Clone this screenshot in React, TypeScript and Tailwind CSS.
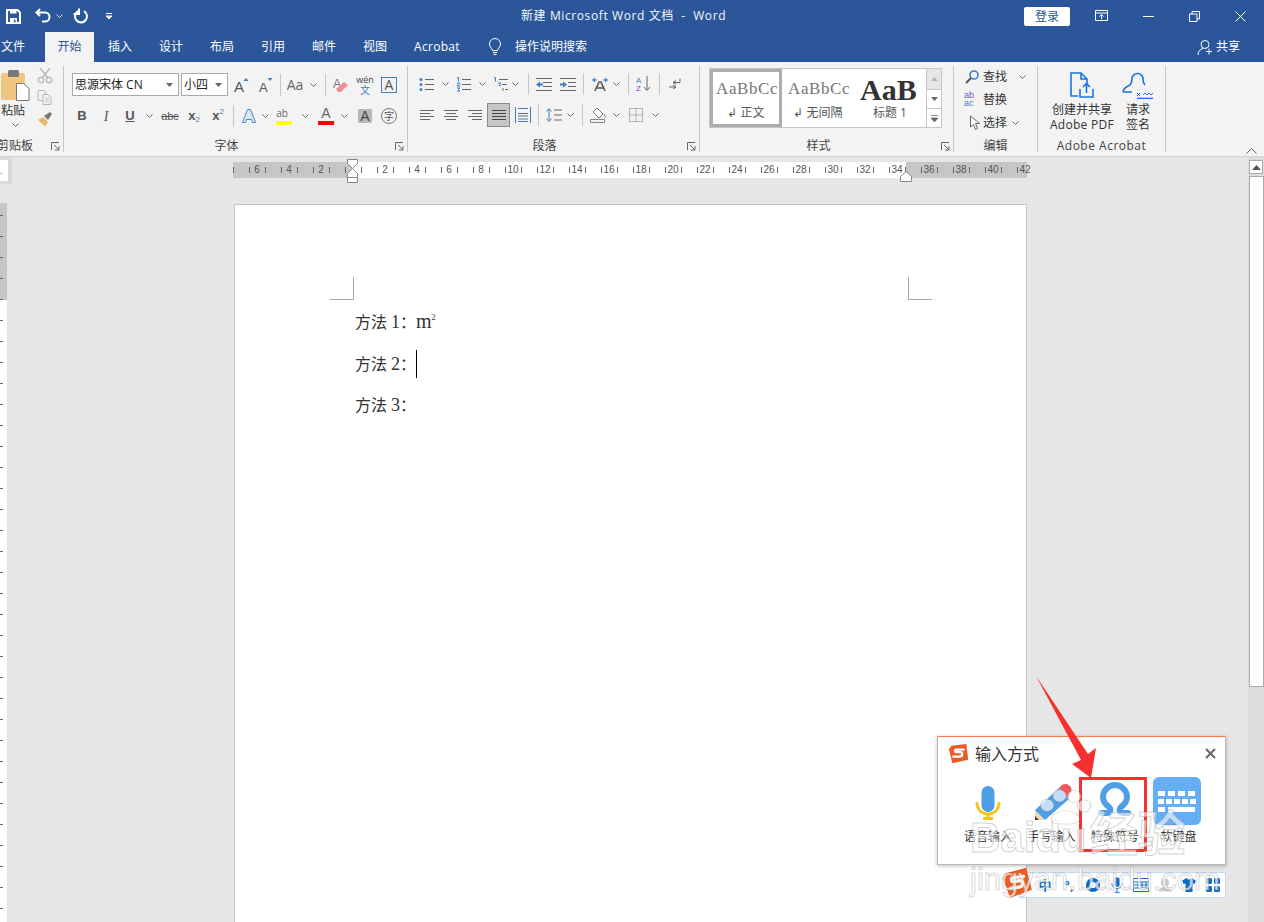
import React from "react";

const Svg = ({ w = 16, h = 16, children, className = "" }: { w?: number; h?: number; children: React.ReactNode; className?: string }) => (
  <svg width={w} height={h} viewBox={`0 0 ${w} ${h}`} fill="none" className={`shrink-0 ${className}`}>
    {children}
  </svg>
);

const Chev = ({ className = "w-[12px]", color = "#666" }: { className?: string; color?: string }) => (
  <div className={`flex items-center justify-center shrink-0 ${className}`}>
    <svg width="7" height="4" viewBox="0 0 7 4" fill="none">
      <path d="M.5.5l3 3 3-3" stroke={color} />
    </svg>
  </div>
);

const Cell = ({ className = "", children }: { className?: string; children: React.ReactNode }) => (
  <div className={`flex items-center justify-center shrink-0 h-[24px] ${className.includes("w-[") ? className : `w-[24px] ${className}`}`}>{children}</div>
);

const Sep = ({ className = "" }: { className?: string }) => <div className={`w-px h-[22px] bg-[#c6c6c6] shrink-0 ${className}`} />;

const Launcher = () => (
  <svg width="9" height="9" viewBox="0 0 9 9" fill="none" className="absolute right-[3px] bottom-[1px]">
    <path d="M.5 8V.5H8M3 3l4.5 4.5M4 8h4V4" stroke="#666" />
  </svg>
);

const GroupLabel = ({ children, className = "" }: { children: React.ReactNode; className?: string }) => (
  <div className={`h-[15px] mt-auto -mb-[1px] text-[12px] leading-[15px] text-[#444] whitespace-nowrap ${className}`}>{children}</div>
);

const Lines = ({ rows, color = "#666" }: { rows: [number, number][]; color?: string }) => (
  <Svg w={16} h={15}>
    {rows.map(([x, x2], i) => (
      <path key={i} d={`M${x} ${2.5 + i * 3}H${x2}`} stroke={color} />
    ))}
  </Svg>
);

const S = ({ size }: { size: number }) => (
  <svg width={size} height={size} viewBox="0 0 24 24">
    <path d="M4 3l17-2 2 18-18 4-4-16z" fill="#ef5a22" />
    <path d="M18 7.5H9.5c-2 0-2 3 0 3h5c2.5 0 2.5 5-1 5H6" stroke="#fff" strokeWidth="2.6" fill="none" strokeLinecap="round" />
  </svg>
);

const tabs = ["插入", "设计", "布局", "引用", "邮件", "视图"];
const rulerMarks = [6, 4, 2, 0, 2, 4, 6, 8, 10, 12, 14, 16, 18, 20, 22, 24, 26, 28, 30, 32, 34, 36, 38, 40, 42];
const vTicks = Array.from({ length: 34 }, (_, i) => i);

const TitleBar = () => (
  <div className="h-[32px] flex items-center text-white shrink-0">
    <div className="w-[42px] pl-[6px] shrink-0">
      <Svg w={15} h={15}>
        <path d="M1 1h10.500L14 3.500V14H1z" stroke="#fff" strokeWidth="2" />
        <path d="M4 1.500h6.500v3H4zM4 9h7v5H4z" fill="#fff" />
        <path d="M8 10.500h1.500v3H8z" fill="#2b579a" />
      </Svg>
    </div>
    <Svg w={16} h={16} className="-ml-[7px]">
      <path d="M5 1L1.500 4.500 5 8M2 4.500h8a4.500 4.500 0 0 1 0 9H7" stroke="#fff" strokeWidth="2" />
    </Svg>
    <Chev className="w-[8px] ml-[4px]" color="#dfe6f1" />
    <Svg w={16} h={16} className="ml-[10px]">
      <path d="M5 3.200a6 6 0 1 0 6 0M6 .5v5.500H.5" stroke="#fff" strokeWidth="2" />
    </Svg>
    <Svg w={8} h={8} className="ml-[16px]">
      <path d="M1 1.500h6M1 4l3 3 3-3z" stroke="#fff" fill="#fff" />
    </Svg>
    <div className="ml-[408px] w-[206px] text-[12px] tracking-[0.6px] whitespace-nowrap text-[#f4f6fa]">新建 Microsoft Word 文档&nbsp;&nbsp;-&nbsp;&nbsp;Word</div>
    <div className="ml-[297px] w-[46px] h-[19px] rounded-[2px] bg-white text-[#2b579a] text-[12px] leading-[19px] text-center">登录</div>
    <Svg w={14} h={12} className="ml-[25px]">
      <path d="M.5.5h12v10H.5zM1 3h11M6.500 9V5M4.500 6.500l2-2 2 2" stroke="#fff" />
    </Svg>
    <div className="ml-[34px] w-[11px] h-px bg-white" />
    <Svg w={11} h={11} className="ml-[35px]">
      <path d="M.5 3h7.500v7.500h-7.500zM3 3V.5h7.500V8H8" stroke="#fff" />
    </Svg>
    <Svg w={11} h={11} className="ml-[35px]">
      <path d="M.5.5l10 10M10.500.5l-10 10" stroke="#fff" />
    </Svg>
  </div>
);

const TabBar = () => (
  <div className="h-[30px] flex text-white text-[12px] leading-[30px] shrink-0">
    <div className="ml-[1px] w-[24px]">文件</div>
    <div className="ml-[20px] w-[49px] bg-[#f3f3f3] text-[#2b579a] text-center">开始</div>
    <div className="flex gap-[27px] ml-[14px]">
      {tabs.map((t) => (
        <div key={t} className="w-[24px]">{t}</div>
      ))}
      <div className="w-[46px] whitespace-nowrap tracking-[0.3px]">Acrobat</div>
    </div>
    <div className="flex items-center ml-[28px]">
      <Svg w={14} h={18}>
        <path d="M4.500 12.500C4 10 1.500 9 1.500 6a5.500 5.500 0 0 1 11 0c0 3-2.500 4-3 6.500zM5 14.500h4M5.500 16.500h3" stroke="#fff" />
      </Svg>
    </div>
    <div className="ml-[13px] w-[72px]">操作说明搜索</div>
    <div className="ml-auto flex items-center mr-[24px]">
      <Svg w={16} h={17}>
        <circle cx="8" cy="5.500" r="4" stroke="#fff" />
        <path d="M1 16c0-4 2.500-6 5-6.500M9 12.500h6M12 9.500v6" stroke="#fff" />
      </Svg>
      <span className="ml-[3px]">共享</span>
    </div>
  </div>
);

const ClipboardGroup = () => (
  <div className="relative w-[64px] h-[86px] shrink-0 flex flex-col border-r border-[#c6c6c6] overflow-hidden">
    <div className="flex">
      <div className="w-[32px] pl-[1px] pt-[4px] flex flex-col">
        <Svg w={29} h={31}>
          <rect x="0" y="3" width="24" height="27" rx="2" fill="#efc67f" />
          <rect x="7" y="0" width="11" height="7" rx="1.500" fill="#777" />
          <path d="M15.500 13.500h7l5.500 5v12h-12.500z" fill="#fff" stroke="#777" />
        </Svg>
        <div className="text-[12px] leading-[14px] mt-[3px] text-[#333] whitespace-nowrap">粘贴</div>
        <Chev className="w-[28px] h-[10px] mt-[2px]" />
      </div>
      <div className="ml-[1px] w-[24px] flex flex-col items-center pt-[1px]">
        <Svg w={16} h={17}>
          <path d="M3 1l8 10M13 1L5 11" stroke="#b5b5b5" strokeWidth="1.300" />
          <circle cx="4" cy="13" r="2.700" stroke="#b5b5b5" strokeWidth="1.300" />
          <circle cx="12" cy="13" r="2.700" stroke="#b5b5b5" strokeWidth="1.300" />
        </Svg>
        <Svg w={16} h={15} className="mt-[6px]">
          <path d="M1 .5h6l1.500 1.500v2M1 .5v10h4M6 4.500h5l3 3v7H6z" stroke="#b5b5b5" fill="#f3f3f3" />
          <path d="M8 8h4M8 10h4M8 12h4" stroke="#c5c5c5" />
        </Svg>
        <Svg w={16} h={16} className="mt-[6px]">
          <path d="M1 9l5-3 5 5-3 4.500z" fill="#e8b96c" />
          <path d="M7 5l6-4 2 2-4 6z" fill="#777" />
        </Svg>
      </div>
    </div>
    <GroupLabel className="-ml-[3px]">剪贴板</GroupLabel>
    <Launcher />
  </div>
);

const FontGroup = () => (
  <div className="relative w-[344px] h-[86px] shrink-0 flex flex-col border-r border-[#c6c6c6]">
    <div className="flex items-center pl-[8px] mt-[7px] h-[23px]">
      <div className="w-[107px] h-[23px] bg-white border border-[#ababab] flex items-center pl-[2px] text-[12px] text-[#222]">
        <span className="flex-1 whitespace-nowrap">思源宋体 CN</span>
        <Svg w={7} h={4} className="mr-[5px]"><path d="M0 0h7L3.500 4z" fill="#666" /></Svg>
      </div>
      <div className="ml-[2px] w-[47px] h-[23px] bg-white border border-[#ababab] flex items-center pl-[2px] text-[12px] text-[#222]">
        <span className="flex-1">小四</span>
        <Svg w={7} h={4} className="mr-[5px]"><path d="M0 0h7L3.500 4z" fill="#666" /></Svg>
      </div>
      <Cell className="w-[24px] ml-[1px]">
        <Svg w={16} h={16}>
          <text x="1" y="15" fontSize="15" fill="#555" fontFamily="Liberation Sans">A</text>
          <path d="M10.500 4l2.500-3 2.500 3z" fill="#3f7fc1" />
        </Svg>
      </Cell>
      <Cell>
        <Svg w={16} h={16}>
          <text x="2" y="15" fontSize="13" fill="#555" fontFamily="Liberation Sans">A</text>
          <path d="M10.500 1l2.500 3 2.500-3z" fill="#3f7fc1" />
        </Svg>
      </Cell>
      <Sep className="ml-[3px]" />
      <Cell className="w-[24px] ml-[2px] text-[14px] text-[#666]">Aa</Cell>
      <Chev className="w-[10px] ml-[1px]" />
      <Sep className="ml-[7px]" />
      <Cell className="w-[24px] ml-[3px]">
        <Svg w={16} h={16}>
          <text x="0" y="11" fontSize="12" fill="#777" fontFamily="Liberation Sans">A</text>
          <path d="M3 12l8-7 4 3-7 7H5z" fill="#ee8d9b" />
        </Svg>
      </Cell>
      <Cell className="w-[24px] flex-col">
        <span className="text-[9px] leading-[10px] text-[#444]">wén</span>
        <span className="text-[10px] leading-[10px] text-[#3f7fc1]">文</span>
      </Cell>
      <Cell className="w-[24px]">
        <div className="w-[16px] h-[16px] border border-[#4a7eb5] text-[14px] text-[#555] leading-[14px] text-center">A</div>
      </Cell>
    </div>
    <div className="flex items-center pl-[6px] mt-[8px] h-[24px]">
      <Cell className="font-bold text-[13px] text-[#555] font-['Liberation_Sans',sans-serif]">B</Cell>
      <Cell className="italic text-[14px] text-[#555] font-['Liberation_Serif',serif]">I</Cell>
      <Cell className="font-bold text-[13px] text-[#555] underline font-['Liberation_Sans',sans-serif]">U</Cell>
      <Chev className="w-[14px]" />
      <Cell className="ml-[2px] text-[11px] text-[#555] line-through font-['Liberation_Sans',sans-serif]">abc</Cell>
      <Cell className="font-bold text-[13px] text-[#555] font-['Liberation_Sans',sans-serif]">
        x<span className="text-[8px] text-[#3f7fc1] font-normal translate-y-[4px]">2</span>
      </Cell>
      <Cell className="font-bold text-[13px] text-[#555] font-['Liberation_Sans',sans-serif]">
        x<span className="text-[8px] text-[#3f7fc1] font-normal -translate-y-[4px]">2</span>
      </Cell>
      <Sep className="ml-[3px]" />
      <Cell className="ml-[3px]">
        <Svg w={16} h={16}>
          <path d="M1.500 14.500L6.500 1.500h3l5 13h-3l-1-3h-5l-1 3z" fill="#dbe9f7" stroke="#4a86c8" />
        </Svg>
      </Cell>
      <Chev className="w-[8px]" />
      <Cell className="ml-[3px] flex-col">
        <span className="text-[10px] leading-[11px] text-[#666] -ml-[4px]">ab</span>
        <div className="w-[16px] h-[4px] mt-[2px] bg-[#ffff00]" />
      </Cell>
      <Chev className="w-[12px] ml-[3px]" />
      <Cell className="ml-[3px] flex-col">
        <span className="text-[14px] leading-[13px] text-[#666] font-['Liberation_Sans',sans-serif]">A</span>
        <div className="w-[16px] h-[4px] mt-[1px] bg-[#ff0000]" />
      </Cell>
      <Chev />
      <Cell className="ml-[3px]">
        <div className="w-[14px] h-[14px] bg-[#b8b8b8] text-[14px] leading-[14px] text-center text-[#444] font-['Liberation_Sans',sans-serif]">A</div>
      </Cell>
      <Cell>
        <div className="w-[16px] h-[16px] rounded-full border border-[#777] text-[10px] leading-[14px] text-center text-[#555]">字</div>
      </Cell>
    </div>
    <GroupLabel className="text-center pr-[18px]">字体</GroupLabel>
    <Launcher />
  </div>
);

const ParagraphGroup = () => (
  <div className="relative w-[292px] h-[86px] shrink-0 flex flex-col border-r border-[#c6c6c6]">
    <div className="flex items-center pl-[11px] mt-[6px] h-[24px]">
      <Cell className="w-[16px]">
        <Svg w={16} h={15}>
          <path d="M6 2.500h9M6 7.500h9M6 12.500h9" stroke="#666" />
          <circle cx="2" cy="2.500" r="1.500" fill="#3f7fc1" />
          <circle cx="2" cy="7.500" r="1.500" fill="#3f7fc1" />
          <circle cx="2" cy="12.500" r="1.500" fill="#3f7fc1" />
        </Svg>
      </Cell>
      <Chev className="w-[12px] ml-[4px]" />
      <Cell className="w-[16px] ml-[5px]">
        <Svg w={16} h={15}>
          <path d="M6 2.500h9M6 7.500h9M6 12.500h9" stroke="#666" />
          <path d="M1 1l1.500-.5v4M1 6h3v.500l-3 2.500h3M1 11h3l-2 1.500 2 1.500H1" stroke="#3f7fc1" />
        </Svg>
      </Cell>
      <Chev className="w-[12px] ml-[4px]" />
      <Cell className="w-[16px] ml-[5px]">
        <Svg w={16} h={15}>
          <path d="M6 2.500h9M9 7.500h5M12 12.500h3" stroke="#666" />
          <path d="M1 1l1.500-.5v4M5 6h3l-2 2 2 1M10 11v3" stroke="#3f7fc1" />
        </Svg>
      </Cell>
      <Chev className="w-[12px]" />
      <Sep className="ml-[7px]" />
      <Cell className="w-[16px] ml-[7px]">
        <Svg w={16} h={13}>
          <path d="M0 .5h16M7 4.500h9M7 8.500h9M0 12.500h16" stroke="#666" />
          <path d="M0 6.500l4-3v2h3v2H4v2z" fill="#3f7fc1" />
        </Svg>
      </Cell>
      <Cell className="w-[16px] ml-[8px]">
        <Svg w={16} h={13}>
          <path d="M0 .5h16M8 4.500h8M8 8.500h8M0 12.500h16" stroke="#666" />
          <path d="M7 6.500l-4-3v2H0v2h3v2z" fill="#3f7fc1" />
        </Svg>
      </Cell>
      <Sep className="ml-[7px]" />
      <Cell className="w-[16px] ml-[8px]">
        <Svg w={16} h={15}>
          <path d="M3 14l4-9h2l4 9M5 11h6" stroke="#555" strokeWidth="1.600" />
          <path d="M0 3l3-2.500v2h2v1H3v2zM16 3L13 .5v2h-2v1h2v2z" fill="#3f7fc1" />
        </Svg>
      </Cell>
      <Chev className="w-[12px] ml-[2px]" />
      <Sep className="ml-[6px]" />
      <Cell className="w-[16px] ml-[7px]">
        <Svg w={16} h={16}>
          <text x="0" y="7" fontSize="8" fill="#3f7fc1" fontFamily="Liberation Sans">A</text>
          <text x="0" y="15" fontSize="8" fill="#8e44ad" fontFamily="Liberation Sans">Z</text>
          <path d="M11 0v14M8 11l3 3.500 3-3.500" stroke="#666" />
        </Svg>
      </Cell>
      <Sep className="ml-[7px]" />
      <Cell className="w-[16px] ml-[7px]">
        <Svg w={13} h={13}>
          <path d="M11 .5v4H5M7 2.500l-3 2 3 2M0 9h7M4 7l3 2-3 2" stroke="#666" />
        </Svg>
      </Cell>
    </div>
    <div className="flex items-center pl-[7px] mt-[7px] h-[24px]">
      <Cell className="w-[24px]"><Lines rows={[[1, 15], [1, 11], [1, 15], [1, 11]]} /></Cell>
      <Cell className="w-[24px]"><Lines rows={[[1, 15], [3, 13], [1, 15], [3, 13]]} /></Cell>
      <Cell className="w-[24px]"><Lines rows={[[1, 15], [5, 15], [1, 15], [5, 15]]} /></Cell>
      <Cell className="w-[23px] bg-[#c6c6c6] border border-[#8a8a8a]"><Lines rows={[[1, 15], [1, 15], [1, 15], [1, 15]]} color="#444" /></Cell>
      <Cell className="w-[24px] ml-[1px]">
        <Svg w={16} h={16}>
          <path d="M.5 0v16M15.500 0v16M3 1.500h10M3 12h10M3 14.500h10" stroke="#4a7eb5" />
          <path d="M3 6.500h10M3 9h10" stroke="#666" />
        </Svg>
      </Cell>
      <Sep className="ml-[3px]" />
      <Cell className="w-[16px] ml-[7px]">
        <Svg w={16} h={16}>
          <path d="M3 2v12M.5 4.500L3 1.500l2.500 3M.5 11.500L3 14.500l2.500-3" stroke="#3f7fc1" />
          <path d="M8 3h8M8 8h8M8 13h8" stroke="#666" />
        </Svg>
      </Cell>
      <Chev className="w-[12px] ml-[2px]" />
      <Sep className="ml-[6px]" />
      <Cell className="w-[16px] ml-[7px]">
        <Svg w={16} h={16}>
          <path d="M7 1l6 6-4 4-6-6zM14 7c1 2 1.500 3 1 3.500" stroke="#777" fill="#fff" />
          <path d="M.5 12.500h14v3H.5z" stroke="#888" />
        </Svg>
      </Cell>
      <Chev className="w-[12px] ml-[4px]" />
      <Cell className="w-[14px] ml-[7px]">
        <Svg w={14} h={14}>
          <path d="M.5.5h13v13H.5zM7 .5v13M.5 7h13" stroke="#777" strokeDasharray="1 1" />
        </Svg>
      </Cell>
      <Chev className="w-[12px] ml-[6px]" />
    </div>
    <GroupLabel className="text-center pr-[18px]">段落</GroupLabel>
    <Launcher />
  </div>
);

const StylePreview = ({ sample, label, active, big }: { sample: string; label: string; active?: boolean; big?: boolean }) => (
  <div className={`w-[72px] h-[58px] shrink-0 overflow-hidden flex flex-col items-center ${active ? "border-[3px] border-[#adadad]" : "border-[3px] border-white"}`}>
    <div className={`h-[34px] w-full flex items-center pl-[3px] whitespace-nowrap font-['Liberation_Serif',serif] ${big ? "text-[30px] font-bold text-[#333]" : "text-[17px] tracking-[0.6px] text-[#777]"}`}>{sample}</div>
    <div className="text-[12px] leading-[13px] text-[#555] whitespace-nowrap">{label}</div>
  </div>
);

const StylesGroup = () => (
  <div className="relative w-[254px] h-[86px] shrink-0 flex flex-col border-r border-[#c6c6c6]">
    <div className="ml-[9px] mt-[2px] w-[233px] h-[60px] flex bg-white border border-[#c6c6c6]">
      <StylePreview sample="AaBbCc" label="↲ 正文" active />
      <StylePreview sample="AaBbCc" label="↲ 无间隔" />
      <StylePreview sample="AaB" label="标题 1" big />
      <div className="flex-1 flex flex-col border-l border-[#c6c6c6]">
        <div className="h-[21px] bg-[#e6e6e6] border-b border-[#c6c6c6] flex items-center justify-center">
          <svg width="7" height="4" viewBox="0 0 7 4"><path d="M0 4h7L3.500 0z" fill="#b5b5b5" /></svg>
        </div>
        <div className="h-[19px] border-b border-[#c6c6c6] flex items-center justify-center">
          <svg width="7" height="4" viewBox="0 0 7 4"><path d="M0 0h7L3.500 4z" fill="#666" /></svg>
        </div>
        <div className="flex-1 flex items-center justify-center">
          <svg width="7" height="7" viewBox="0 0 7 7"><path d="M0 .5h7M0 3h7L3.500 7z" stroke="#666" strokeWidth=".7" fill="#666" /></svg>
        </div>
      </div>
    </div>
    <GroupLabel className="text-center pr-[16px]">样式</GroupLabel>
    <Launcher />
  </div>
);

const EditGroup = () => (
  <div className="w-[84px] h-[86px] shrink-0 flex flex-col border-r border-[#c6c6c6] text-[12px] text-[#333]">
    <div className="pl-[11px] flex flex-col -mt-[1px]">
      <div className="h-[23px] flex items-center">
        <Svg w={14} h={14}>
          <circle cx="9" cy="5" r="4" stroke="#3f7fc1" strokeWidth="1.600" />
          <path d="M6 8l-5 5" stroke="#555" strokeWidth="2" />
        </Svg>
        <span className="ml-[4px] w-[24px]">查找</span>
        <Chev className="w-[8px] ml-[11px]" />
      </div>
      <div className="h-[23px] flex items-center -ml-[1px]">
        <div className="w-[16px] flex flex-col text-[9px] leading-[7px] font-['Liberation_Sans',sans-serif] text-[#3f7fc1]">
          <span>a<span className="text-[#8e44ad]">b</span></span>
          <span className="mt-[1px]">ac</span>
        </div>
        <span className="ml-[3px]">替换</span>
      </div>
      <div className="h-[23px] flex items-center">
        <Svg w={14} h={16} className="ml-[3px]">
          <path d="M2.500 1v11l3-2.500 2 5 2-1-2-5h4z" stroke="#666" fill="#fff" />
        </Svg>
        <span className="ml-[1px] w-[24px]">选择</span>
        <Chev className="w-[8px] ml-[4px]" />
      </div>
    </div>
    <GroupLabel className="text-center">编辑</GroupLabel>
  </div>
);

const AcrobatGroup = () => (
  <div className="w-[128px] h-[86px] shrink-0 flex flex-col border-r border-[#c6c6c6] text-[12px] text-[#333]">
    <div className="flex pt-[6px]">
      <div className="ml-[9px] w-[70px] flex flex-col items-center">
        <Svg w={24} h={27}>
          <path d="M8 24H1V1h10l6 6v5M11 1v6h6" stroke="#1a73e8" strokeWidth="1.600" />
          <path d="M10 17v8h13v-8M16.500 21v-9M13 15l3.500-3.500L20 15" stroke="#1a73e8" strokeWidth="1.600" />
        </Svg>
        <div className="leading-[15px] mt-[3px] text-center whitespace-nowrap">创建并共享</div>
        <div className="leading-[15px] text-center whitespace-nowrap tracking-[0.3px]">Adobe PDF</div>
      </div>
      <div className="ml-[6px] w-[30px] flex flex-col items-center">
        <Svg w={32} h={27} className="-mx-[2px]">
          <path d="M1 20c0-4 5-6 7-7 2-2 2-4 2-6a5.500 5.500 0 0 1 11 0c0 2 0 4 2 6M1 20h9" stroke="#1a73e8" strokeWidth="1.600" />
          <path d="M15 21l3 3M18 21l-3 3M21 23l2-2 2 2 2-2 2 2 2-2" stroke="#1a73e8" />
          <path d="M15 26.500h16" stroke="#1a73e8" strokeWidth="1.600" />
        </Svg>
        <div className="leading-[15px] mt-[3px]">请求</div>
        <div className="leading-[15px]">签名</div>
      </div>
    </div>
    <GroupLabel className="text-center tracking-[0.5px]">Adobe Acrobat</GroupLabel>
  </div>
);

const Ribbon = () => (
  <div className="h-[95px] bg-[#f3f3f3] border-b border-[#d2d2d2] flex items-start pt-[4px] shrink-0">
    <ClipboardGroup />
    <FontGroup />
    <ParagraphGroup />
    <StylesGroup />
    <EditGroup />
    <AcrobatGroup />
    <div className="ml-auto self-end mr-[7px] mb-[2px]">
      <svg width="11" height="6" viewBox="0 0 11 6" fill="none"><path d="M.5 5.500l5-5 5 5" stroke="#666" /></svg>
    </div>
  </div>
);

const Ruler = () => (
  <div className="relative h-[47px] flex shrink-0">
    <div className="w-[12px] h-[27px] bg-[#d9d9d9] flex items-start shrink-0">
      <div className="w-[8px] h-[21px] mt-[3px] bg-white flex items-center text-[9px] leading-none text-[#555]">.</div>
    </div>
    <div className="ml-[221px] mt-[5px] w-[794px] h-[16px] flex bg-[linear-gradient(to_right,#c6c6c6_120px,#fff_120px,#fff_673px,#c6c6c6_673px)]">
      <div className="w-[8px] shrink-0 flex items-center">
        <div className="w-px h-[6px] bg-[#666]" />
      </div>
      {rulerMarks.map((n, i) => (
        <div key={i} className="w-[32px] shrink-0 flex justify-center">
          <div className="w-[17px] flex items-center justify-between text-[10px] leading-[16px] text-[#555] font-['Liberation_Sans',sans-serif]">
            <div className="w-px h-[6px] bg-[#666]" />
            <span className="w-0 flex justify-center">{n === 0 ? "" : n}</span>
            <div className={n === 42 ? "w-px" : "w-px h-[6px] bg-[#666]"} />
          </div>
        </div>
      ))}
    </div>
    {/* indent markers sit on top of the ruler */}
    <svg width="14" height="31" viewBox="0 0 14 31" fill="none" className="absolute left-[346px] top-[2px]">
      <path d="M1.500.5h10v4l-5 5-5-5zM6.500 9.500l5 5v4h-10v-4zM1.500 18.500h10v5h-10z" fill="#fff" stroke="#888" />
    </svg>
    <svg width="14" height="11" viewBox="0 0 14 11" fill="none" className="absolute left-[899px] top-[14px]">
      <path d="M7 .5l5.500 5v5H1.500v-5z" fill="#fff" stroke="#888" />
    </svg>
  </div>
);

const VRuler = () => (
  <div className="w-[7px] shrink-0 -mt-[1px] bg-[linear-gradient(to_bottom,#c6c6c6_97px,#fff_97px)] pt-[12px]">
    {vTicks.map((i) => (
      <div key={i} className="h-[21px]">
        <div className="w-[3px] h-px bg-[#666]" />
      </div>
    ))}
  </div>
);

const Page = () => (
  <div className="ml-[227px] w-[793px] h-[900px] bg-white border border-[#c6c6c6] shrink-0 pt-[72px] font-['Liberation_Serif','Noto_Sans_CJK_SC',serif] text-[16px] text-[#333]">
    <div className="flex ml-[95px] w-[602px] justify-between">
      <div className="w-[24px] h-[23px] border-r border-b border-[#a8a8a8]" />
      <div className="w-[24px] h-[23px] border-l border-b border-[#a8a8a8]" />
    </div>
    <div className="ml-[120px] mt-[10px] flex flex-col">
      <div className="h-[22px] leading-[22px] whitespace-nowrap flex items-baseline">
        方法<span className="text-[18px] ml-[4px]">1</span>：<span className="text-[20px]">m</span><span className="text-[8px] relative -top-[8px]">2</span>
      </div>
      <div className="mt-[21px] h-[22px] leading-[22px] flex items-baseline">
        方法<span className="text-[18px] ml-[4px]">2</span>：<div className="w-px h-[28px] self-start -mt-[3px] bg-black" />
      </div>
      <div className="mt-[19px] h-[22px] leading-[22px] flex items-baseline">
        方法<span className="text-[18px] ml-[4px]">3</span>：
      </div>
    </div>
  </div>
);

const Scrollbar = () => (
  <div className="ml-auto w-[16px] bg-[#dcdcdc] shrink-0 -mt-[47px] pt-[3px] flex flex-col items-center gap-[2px]">
    <div className="w-[14px] h-[14px] bg-white border border-[#ababab] flex items-center justify-center">
      <svg width="9" height="5" viewBox="0 0 9 5"><path d="M0 5h9L4.500 0z" fill="#555" /></svg>
    </div>
    <div className="w-[15px] h-[511px] bg-white border border-[#ababab]" />
  </div>
);

const ImePopup = () => (
  <div className="absolute left-[937px] top-[736px] w-[289px] h-[129px] bg-white border border-[#b9b9b9] border-t-[#ff7b49] shadow-[0_1px_4px_rgba(0,0,0,0.25)]">
    <div className="flex items-center h-[33px] pl-[10px]">
      <S size={21} />
      <span className="ml-[6px] text-[16px] leading-[24px] text-[#333]">输入方式</span>
      <svg width="11" height="11" viewBox="0 0 11 11" className="ml-auto mr-[9px]" fill="none">
        <path d="M1 1l9 9M10 1l-9 9" stroke="#666" strokeWidth="2" />
      </svg>
    </div>
    <div className="flex pl-[18px] mt-[7px]">
      <div className="w-[64px] flex flex-col items-center">
        <svg width="48" height="48" viewBox="0 0 48 48" fill="none">
          <rect x="17.500" y="9" width="13" height="26" rx="6.500" fill="#4f9ee8" />
          <path d="M13 25c0 8 5 12 11 12s11-4 11-12" stroke="#f6c619" strokeWidth="3" />
          <path d="M24 37v4M19 41.500h10" stroke="#f6c619" strokeWidth="3" />
        </svg>
        <span className="text-[12px] leading-[16px] mt-[4px] text-[#333]">语音输入</span>
      </div>
      <div className="w-[63px] flex flex-col items-center">
        <svg width="48" height="48" viewBox="0 0 48 48" fill="none">
          <path d="M7 33L31 11l10 11-24 21H7z" fill="#4f9ee8" />
          <path d="M31 11l3-3c3-2 6-1 8 1s2 6 0 8l-1 5z" fill="#ee5a5a" />
          <path d="M7 33v10h10z" fill="#f3d9b0" />
          <path d="M7 39v4h4z" fill="#444" />
        </svg>
        <span className="text-[12px] leading-[16px] mt-[4px] text-[#333]">手写输入</span>
      </div>
      <div className="w-[64px] flex flex-col items-center">
        <svg width="48" height="48" viewBox="0 0 48 48" fill="none">
          <path d="M11 36h5c4 0 4-4 2-6-4-3-6-6-6-10a12 12 0 0 1 24 0c0 4-2 7-6 10-2 2-2 6 2 6h5" stroke="#4f9ee8" strokeWidth="6" strokeLinecap="round" />
        </svg>
        <span className="text-[12px] leading-[16px] mt-[4px] text-[#333]">特殊符号</span>
      </div>
      <div className="w-[63px] flex flex-col items-center">
        <div className="w-[48px] h-[48px] mr-[4px] rounded-[6px] bg-[#64aef5] flex flex-col gap-[3px] items-center justify-center">
          <div className="grid grid-cols-4 gap-[3px]">
            {[0, 1, 2, 3].map((k) => <div key={k} className="w-[7px] h-[5px] bg-white" />)}
          </div>
          <div className="grid grid-cols-5 gap-[2px]">
            {[0, 1, 2, 3, 4].map((k) => <div key={k} className="w-[6px] h-[5px] bg-white" />)}
          </div>
          <div className="flex gap-[3px]">
            <div className="w-[7px] h-[5px] bg-white" />
            <div className="w-[27px] h-[5px] bg-white" />
          </div>
        </div>
        <span className="text-[12px] leading-[16px] mt-[4px] text-[#333]">软键盘</span>
      </div>
    </div>
  </div>
);

const BarCell = ({ children }: { children: React.ReactNode }) => <div className="w-[24px] h-[24px] flex items-center justify-center shrink-0">{children}</div>;

const ImeBar = () => (
  <div className="absolute left-[1020px] top-[872px] w-[206px] h-[26px] bg-white border border-[#c5d9f1] flex items-center justify-end text-[#0f6cc8]">
    <BarCell><span className="text-[13px] font-bold leading-none">中</span></BarCell>
    <BarCell><span className="text-[13px] font-bold leading-none">°,</span></BarCell>
    <BarCell>
      <svg width="16" height="16" viewBox="0 0 18 18"><circle cx="9" cy="9" r="8" fill="#0f6cc8" /><circle cx="9" cy="9" r="3.500" fill="#fff" /></svg>
    </BarCell>
    <BarCell>
      <svg width="14" height="18" viewBox="0 0 16 20" fill="none"><rect x="5" y="1" width="6" height="11" rx="3" fill="#0f6cc8" /><path d="M2 8c0 4 3 6 6 6s6-2 6-6M8 14v4M5 18.500h6" stroke="#0f6cc8" /></svg>
    </BarCell>
    <BarCell>
      <svg width="16" height="14" viewBox="0 0 16 14" fill="none"><path d="M.5.5h15v13H.5zM1 4h14M1 7h14M1 10h14M5 4v6M9 4v6M13 4v6" stroke="#0f6cc8" /></svg>
    </BarCell>
    <BarCell>
      <svg width="14" height="16" viewBox="0 0 17 18"><circle cx="8.500" cy="6" r="5" fill="#ccc" /><path d="M1 17c0-4 3-6 7.500-6S16 13 16 17z" fill="#ccc" /></svg>
    </BarCell>
    <BarCell>
      <svg width="14" height="16" viewBox="0 0 16 18"><path d="M5 1L0 4l2 4 2-1v10h8V7l2 1 2-4-5-3-3 2z" fill="#0f6cc8" /></svg>
    </BarCell>
    <BarCell>
      <svg width="14" height="14" viewBox="0 0 14 14" fill="#0f6cc8"><rect width="6" height="6" rx="1.500" /><rect x="8" width="6" height="6" rx="1.500" /><rect y="8" width="6" height="6" rx="1.500" /><rect x="8" y="8" width="6" height="6" rx="1.500" /></svg>
    </BarCell>
  </div>
);

const Watermark = () => (
  <div className="absolute left-[970px] top-[815px] w-[232px] flex flex-col pointer-events-none">
    <svg width="56" height="38" viewBox="0 0 50 56" fill="rgba(255,255,255,0.65)" stroke="rgba(120,120,120,0.3)" className="absolute left-[66px] -top-[26px]" preserveAspectRatio="none">
      <ellipse cx="10" cy="24" rx="6" ry="9" />
      <ellipse cx="21" cy="10" rx="6" ry="9" />
      <ellipse cx="34" cy="11" rx="6" ry="9" />
      <ellipse cx="43" cy="25" rx="6" ry="9" />
      <path d="M14 48c-2-10 6-16 12-16s15 6 12 16c-2 5-22 5-24 0z" />
    </svg>
    <div className="flex items-center h-[46px] font-['Liberation_Sans','Noto_Sans_CJK_SC',sans-serif] font-bold text-[42px] leading-none text-white/60 whitespace-nowrap [-webkit-text-stroke:1px_rgba(120,120,120,0.35)]">
      <span>Baidu</span>
      <span className="text-[48px] ml-[3px] -mt-[6px]">经验</span>
    </div>
    <div className="mt-[3px] font-['Liberation_Sans',sans-serif] text-[31px] leading-[32px] text-white/70 whitespace-nowrap [-webkit-text-stroke:1px_rgba(120,120,120,0.3)]">jingyan.baidu.com</div>
  </div>
);

export default function App() {
  return (
    <div className="relative w-[1264px] h-[922px] overflow-hidden bg-[#2b579a] flex flex-col font-['Open_Sans','Noto_Sans_CJK_SC',sans-serif]">
      <TitleBar />
      <TabBar />
      <Ribbon />
      <div className="flex-1 bg-[#e6e6e6] flex flex-col min-h-0 overflow-hidden">
        <Ruler />
        <div className="flex flex-1 min-h-0">
          <VRuler />
          <Page />
          <Scrollbar />
        </div>
      </div>
      <ImePopup />
      <ImeBar />
      <div className="absolute left-[1002px] top-[868px] rotate-[-8deg]">
        <S size={30} />
      </div>
      {/* red callout from the tutorial */}
      <div className="absolute left-[1079px] top-[777px] w-[68px] h-[75px] border-[3px] border-[#f5302f]" />
      <svg width="70" height="110" viewBox="0 0 70 110" className="absolute left-[1033px] top-[674px]">
        <path d="M3 2L48 86l-9 4 19 14 5-30-8 6z" fill="#f5302f" />
      </svg>
      <Watermark />
    </div>
  );
}
